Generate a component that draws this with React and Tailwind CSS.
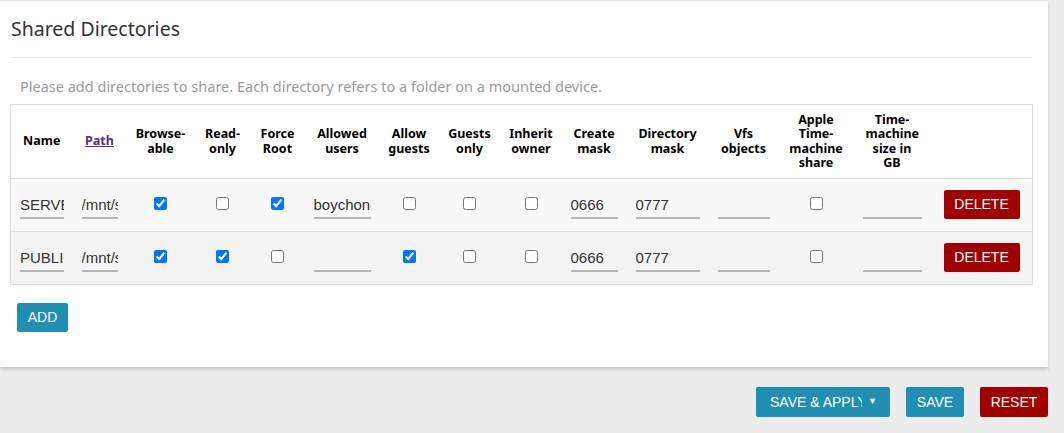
const columns = [
  { key: 'name', label: 'Name', w: 'w-[62px] px-[8px]' },
  { key: 'path', label: 'Path', w: 'w-[54px] px-[8px]', link: true },
  { key: 'browseable', label: 'Browse-able', w: 'w-[68px] px-[8px]' },
  { key: 'readonly', label: 'Read-only', w: 'w-[56px] px-[8px]' },
  { key: 'forceroot', label: 'Force Root', w: 'w-[54px] px-[8px]' },
  { key: 'users', label: 'Allowed users', w: 'w-[75px] px-[8px]' },
  { key: 'guests', label: 'Allow guests', w: 'w-[59px] px-[8px]' },
  { key: 'guestsonly', label: 'Guests only', w: 'w-[62px] px-[8px]' },
  { key: 'inherit', label: 'Inherit owner', w: 'w-[61px] px-[8px]' },
  { key: 'cmask', label: 'Create mask', w: 'w-[65px] px-[8px]' },
  { key: 'dmask', label: 'Directory mask', w: 'w-[82px] px-[8px]' },
  { key: 'vfs', label: 'Vfs objects', w: 'w-[70px] px-[8px]' },
  { key: 'tm', label: 'Apple Time-machine share', w: 'w-[75px] px-[8px]' },
  { key: 'tmsize', label: 'Time-machine size in GB', w: 'w-[77px] px-[12px]' },
  { key: 'actions', label: '', w: 'w-[102px] px-[8px]' },
];

const rows = [
  { name: 'SERVER', path: '/mnt/sda1', browseable: true, readonly: false, forceroot: true, users: 'boychong', guests: false, guestsonly: false, inherit: false, cmask: '0666', dmask: '0777', vfs: '', tm: false, tmsize: '' },
  { name: 'PUBLIC', path: '/mnt/sda1', browseable: true, readonly: true, forceroot: false, users: '', guests: true, guestsonly: false, inherit: false, cmask: '0666', dmask: '0777', vfs: '', tm: false, tmsize: '' },
];

const TextField = ({ value }) => (
  <input
    type="text"
    defaultValue={value}
    className="w-full h-[28px] bg-transparent border-0 border-b-2 border-[#b5b5b5] text-[15px] text-[#333] font-['Liberation_Sans',Arial,sans-serif] outline-none px-0"
  />
);

const Check = ({ checked }) => (
  <input type="checkbox" defaultChecked={checked} className="w-[13px] h-[13px] m-0 mb-[6px] align-middle" />
);

export default function App() {
  return (
    <div className="min-h-[433px] bg-[#ececec] font-['Noto_Sans',sans-serif]">
      <div className="w-[1048px]">
        <div className="bg-white border-t border-[#e2e2e2] shadow-[0_2px_3px_rgba(0,0,0,0.18)] pl-[10px] pr-[16px] pb-[35px]">
          <h3 className="pl-[1px] pt-[15px] h-[56px] text-[19.5px] text-[#333] leading-[26px]">Shared Directories</h3>
          <div className="border-t border-[#e6e6e6] ml-[1px]" />
          <p className="pl-[10px] pt-[18px] pb-[8px] text-[14.5px] leading-[20px] text-[#9a9a9a]">
            Please add directories to share. Each directory refers to a folder on a mounted device.
          </p>
          <table className="table-fixed w-[1022px] border border-[#dcdcdc] border-collapse">
            <thead>
              <tr className="h-[74px] bg-white">
                {columns.map(c => (
                  <th key={c.key} className={`${c.w} text-center align-middle text-[12.5px] leading-[14.5px] font-bold text-black`}>
                    {c.link ? <span className="underline text-[#5a2d82]">{c.label}</span> : c.label}
                  </th>
                ))}
              </tr>
            </thead>
            <tbody>
              {rows.map((r, i) => (
                <tr key={r.name} className={`h-[53px] border-t border-[#dcdcdc] ${i === 0 ? 'bg-[#f8f8f8]' : 'bg-[#f3f3f3]'}`}>
                  <td className="px-[9px] align-middle"><TextField value={r.name} /></td>
                  <td className="px-[9px] align-middle"><TextField value={r.path} /></td>
                  <td className="text-center align-middle"><Check checked={r.browseable} /></td>
                  <td className="text-center align-middle"><Check checked={r.readonly} /></td>
                  <td className="text-center align-middle"><Check checked={r.forceroot} /></td>
                  <td className="px-[9px] align-middle"><TextField value={r.users} /></td>
                  <td className="text-center align-middle"><Check checked={r.guests} /></td>
                  <td className="text-center align-middle"><Check checked={r.guestsonly} /></td>
                  <td className="text-center align-middle"><Check checked={r.inherit} /></td>
                  <td className="px-[9px] align-middle"><TextField value={r.cmask} /></td>
                  <td className="px-[9px] align-middle"><TextField value={r.dmask} /></td>
                  <td className="px-[9px] align-middle"><TextField value={r.vfs} /></td>
                  <td className="text-center align-middle"><Check checked={r.tm} /></td>
                  <td className="px-[9px] align-middle"><TextField value={r.tmsize} /></td>
                  <td className="pl-[13px] align-middle">
                    <button className="w-[76px] h-[29px] mb-[2px] bg-[#a00000] text-white text-[14px] rounded-[2px] font-['Liberation_Sans',Arial,sans-serif]">DELETE</button>
                  </td>
                </tr>
              ))}
            </tbody>
          </table>
          <button className="mt-[18px] ml-[7px] w-[51px] h-[29px] bg-[#218fb1] text-white text-[14px] rounded-[2px] font-['Liberation_Sans',Arial,sans-serif]">ADD</button>
        </div>
        <div className="flex justify-end gap-[16px] mt-[20px] font-['Liberation_Sans',Arial,sans-serif] text-[14px] text-white">
          <button className="w-[134px] h-[30px] bg-[#218fb1] rounded-[2px] flex items-center pl-[14px] pr-[10px]">
            <span className="w-[92px] overflow-hidden whitespace-nowrap text-left">SAVE &amp; APPLY</span>
            <span className="ml-[6px] text-[9px]">▼</span>
          </button>
          <button className="w-[58px] h-[30px] bg-[#218fb1] rounded-[2px]">SAVE</button>
          <button className="w-[68px] h-[30px] bg-[#a00000] rounded-[2px]">RESET</button>
        </div>
      </div>
    </div>
  );
}
